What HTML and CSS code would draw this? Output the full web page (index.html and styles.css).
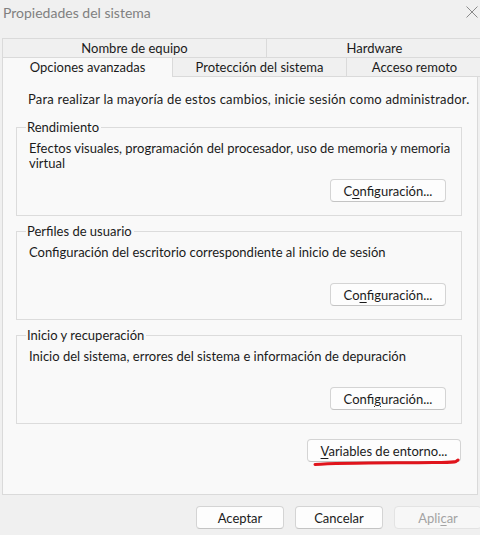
FILE: index.html
```html
<!DOCTYPE html>
<html lang="es">
<head>
<meta charset="utf-8">
<title>Propiedades del sistema</title>
<link rel="stylesheet" href="styles.css">
</head>
<body>
<div class="window">
  <div class="titlebar">
    <span class="title">Propiedades del sistema</span>
    <svg class="close" width="12" height="12" viewBox="0 0 12 12"><path d="M0.5 0.5 L11.5 11.5 M11.5 0.5 L0.5 11.5" stroke="#8a8a8a" stroke-width="1" fill="none"/></svg>
  </div>
  <div class="tabs">
    <div class="tabrow row1">
      <div class="tab t-nombre">Nombre de equipo</div>
      <div class="tab t-hardware">Hardware</div>
    </div>
    <div class="tabrow row2">
      <div class="tab selected t-opciones">Opciones avanzadas</div>
      <div class="tab t-proteccion">Protección del sistema</div>
      <div class="tab t-acceso">Acceso remoto</div>
    </div>
  </div>
  <div class="panel">
    <p class="intro">Para realizar la mayoría de estos cambios, inicie sesión como administrador.</p>
    <fieldset class="group">
      <legend>Rendimiento</legend>
      <p class="desc">Efectos visuales, programación del procesador, uso de memoria y memoria virtual</p>
      <div class="actions"><button class="btn cfg">C<u>o</u>nfiguración...</button></div>
    </fieldset>
    <fieldset class="group">
      <legend>Perfiles de usuario</legend>
      <p class="desc">Configuración del escritorio correspondiente al inicio de sesión</p>
      <div class="actions"><button class="btn cfg">Co<u>n</u>figuración...</button></div>
    </fieldset>
    <fieldset class="group">
      <legend>Inicio y recuperación</legend>
      <p class="desc">Inicio del sistema, errores del sistema e información de depuración</p>
      <div class="actions"><button class="btn cfg">Confi<u>g</u>uración...</button></div>
    </fieldset>
    <div class="env-row">
      <div class="env-wrap">
        <button class="btn env"><u>V</u>ariables de entorno...</button>
        <svg class="mark" width="150" height="10" viewBox="0 0 150 10"><path d="M2 6.5 C 30 4.5, 80 5, 120 4.5 C 132 4.3, 140 4.6, 143 3.5 L 145 2" stroke="#e0141c" stroke-width="3" stroke-linecap="round" fill="none"/></svg>
      </div>
    </div>
  </div>
  <div class="footer">
    <button class="btn foot">Aceptar</button>
    <button class="btn foot">Cancelar</button>
    <button class="btn foot disabled">Apli<u>c</u>ar</button>
  </div>
</div>
</body>
</html>
```

FILE: styles.css
```css
* { box-sizing: border-box; }
html, body { margin: 0; padding: 0; }
body {
  width: 480px;
  height: 535px;
  overflow: hidden;
  background: #f0f0f0;
  font-family: "Lato", "Liberation Sans", sans-serif;
  font-size: 13px;
  line-height: 15px;
  color: #1b1b1b;
}
.window { width: 485px; }
.titlebar {
  height: 38px;
  display: flex;
  align-items: flex-start;
  padding: 4px 7px 0 3px;
  position: relative;
}
.title {
  font-size: 14px;
  line-height: 17px;
  color: #808080;
  width: 460px;
}
.close { position: absolute; left: 466px; top: 6px; }

.tabs { display: flex; flex-direction: column; }
.tabrow { display: flex; height: 19px; }
.row2 { height: 20px; }
.tab {
  border: 1px solid #dadada;
  border-bottom: none;
  text-align: center;
  line-height: 18px;
  background: #f0f0f0;
  white-space: nowrap;
}
.row1 .tab { margin-left: -1px; }
.t-nombre { margin-left: 2px !important; width: 265px; }
.t-hardware { width: 217px; }
.row2 .tab { margin-left: -1px; line-height: 19px; }
.t-opciones { margin-left: 2px !important; width: 171px; background: #f9f9f9; }
.t-proteccion { width: 175px; }
.t-acceso { width: 137px; }
.row2 .tab:not(.selected) { border-bottom: 1px solid #dadada; }

.panel {
  margin-left: 2px;
  width: 476px;
  height: 418px;
  background: #f9f9f9;
  border: 1px solid #dadada;
  border-top: none;
  padding: 15px 0 0 13px;
}
.intro { margin: 0 0 13px 12px; letter-spacing: 0.2px; white-space: nowrap; }
.group {
  margin: 0 0 8px 0;
  width: 446px;
  border: 1px solid #dcdcdc;
  padding: 0 15px 13px 12px;
  min-width: 0;
}
.group legend {
  padding: 0 2px 0 1px;
  margin-left: -3px;
  line-height: 15px;
}
.desc { margin: 6px -12px 0 0; height: 30px; }
.actions { display: flex; justify-content: flex-end; margin-top: 8px; }
.btn {
  font: inherit;
  color: #1b1b1b;
  background: #fdfdfd;
  border: 1px solid #d4d4d4;
  border-bottom-color: #c4c4c4;
  border-radius: 4px;
  height: 23px;
  padding: 0;
  line-height: 20px;
}
.btn u { text-decoration-thickness: 1px; text-underline-offset: 2px; }
.cfg { width: 116px; }
.env-row { display: flex; justify-content: flex-end; width: 446px; margin-top: 15px; }
.env-wrap { position: relative; margin-right: 1px; }
.env { width: 154px; }
.mark { position: absolute; left: 6px; top: 19px; }
.footer {
  display: flex;
  gap: 11px;
  padding: 11px 0 0 196px;
}
.foot { width: 88px; }
.foot.disabled { color: #a3a3a3; background: #f7f7f7; border-color: #e3e3e3; }
```
